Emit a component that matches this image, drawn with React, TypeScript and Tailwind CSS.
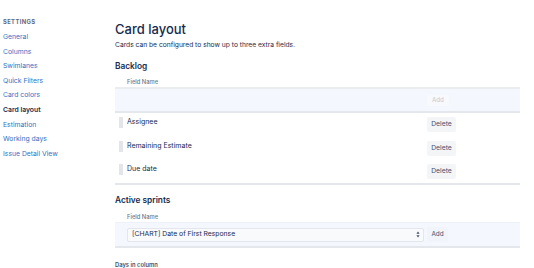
import React from "react";

const navItems = [
  "General",
  "Columns",
  "Swimlanes",
  "Quick Filters",
  "Card colors",
  "Card layout",
  "Estimation",
  "Working days",
  "Issue Detail View",
];

const rows = ["Assignee", "Remaining Estimate", "Due date"];

export default function App() {
  return (
    <div
      className="flex w-[534px] h-[268px] overflow-hidden bg-white text-[#172b4d]"
      style={{ fontFamily: "Inter, 'Liberation Sans', sans-serif" }}
    >
      {/* Sidebar */}
      <div className="w-[115px] shrink-0 pl-[3px] pt-[18px]">
        <div className="text-[5.8px] leading-[8px] font-bold tracking-[0.4px] text-[#5e6c84]">
          SETTINGS
        </div>
        <ul className="mt-[4px]">
          {navItems.map((n) => (
            <li
              key={n}
              className={
                "text-[6.8px] leading-[14.6px] " +
                (n === "Card layout"
                  ? "font-semibold text-[#172b4d]"
                  : "text-[#2f72c4]")
              }
            >
              {n}
            </li>
          ))}
        </ul>
      </div>

      {/* Main */}
      <div className="flex-1 pr-[14px]">
        <h1 className="pt-[21px] text-[13px] leading-[16px] font-medium text-[#172b4d]">
          Card layout
        </h1>
        <p className="mt-[3px] text-[6.7px] leading-[10px] text-[#172b4d]">
          Cards can be configured to show up to three extra fields.
        </p>

        <h2 className="mt-[10px] text-[8.3px] leading-[12px] font-semibold text-[#172b4d]">
          Backlog
        </h2>
        <div className="mt-[6px] pl-[12px] text-[5.8px] leading-[8px] font-medium text-[#6b778c]">
          Field Name
        </div>

        {/* Backlog table */}
        <div className="mt-[1px] border-t-2 border-[#ebecf0]">
          <div className="flex h-[24px] items-center bg-[#f4f7fd] border-b-2 border-[#e4e7ec]">
            <div className="w-[312px] shrink-0" />
            <div className="flex h-[11px] w-[22px] items-center justify-center rounded-[2px] bg-[#f7f9fd] text-[6.2px] text-[#c5cad3]">
              Add
            </div>
          </div>
          <div className="flex flex-col gap-[8.5px] pt-[4px] pb-[4px] border-b-2 border-[#e4e7ec]">
            {rows.map((r) => (
              <div key={r} className="flex h-[15px] items-start">
                <div className="ml-[4px] h-[11px] w-[4px] shrink-0 bg-[#e4e5e8]" />
                <div className="ml-[4px] w-[300px] shrink-0 text-[7px] leading-[10px] text-[#172b4d]">
                  {r}
                </div>
                <div className="flex h-[15px] w-[29px] items-center justify-center rounded-[2px] bg-[#f4f5f7] text-[6.8px] text-[#42526e]">
                  Delete
                </div>
              </div>
            ))}
          </div>
        </div>

        <h2 className="mt-[9px] text-[8.3px] leading-[12px] font-semibold text-[#172b4d]">
          Active sprints
        </h2>
        <div className="mt-[7px] pl-[12px] text-[5.8px] leading-[8px] font-medium text-[#6b778c]">
          Field Name
        </div>

        <div className="mt-[1px] flex h-[26px] items-center bg-[#f4f7fd] border-t border-b-2 border-t-[#eef1f7] border-b-[#e4e7ec]">
          <div className="ml-[12px] flex h-[14px] w-[297px] items-center justify-between rounded-[2px] border border-[#e3e6ec] bg-[#f9fafc] pl-[4px] pr-[3px]">
            <span className="text-[6.8px] text-[#172b4d]">
              [CHART] Date of First Response
            </span>
            <svg width="4" height="7" viewBox="0 0 4 7">
              <path d="M2 0.5 L3.6 2.8 H0.4 Z" fill="#42526e" />
              <path d="M2 6.5 L3.6 4.2 H0.4 Z" fill="#42526e" />
            </svg>
          </div>
          <div className="ml-[3px] flex h-[15px] w-[21px] items-center justify-center rounded-[2px] bg-[#f1f4fa] text-[6.4px] text-[#42526e]">
            Add
          </div>
        </div>

        <div className="mt-[13px] text-[5.8px] leading-[8px] font-semibold text-[#42526e]">
          Days in column
        </div>
      </div>
    </div>
  );
}
